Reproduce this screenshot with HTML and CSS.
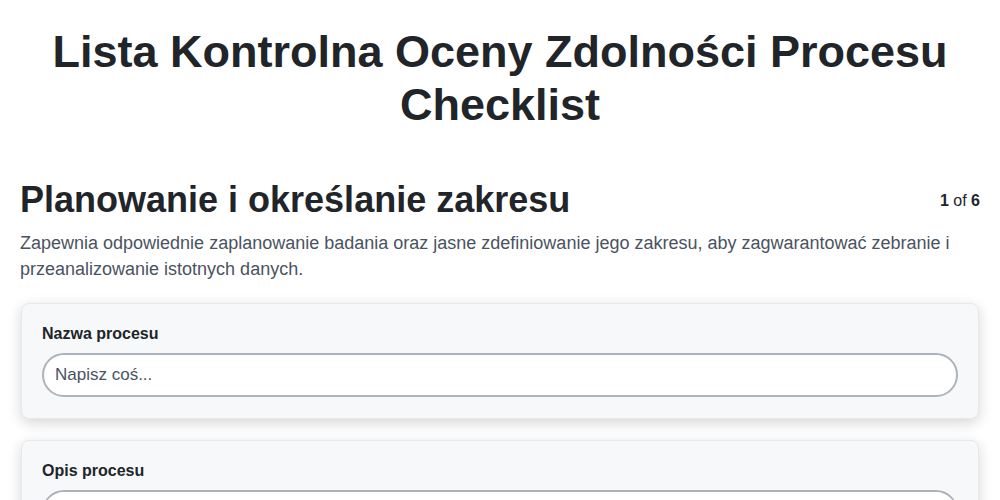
FILE: index.html
```html
<!DOCTYPE html>
<html lang="pl">
<head>
    <meta charset="UTF-8">
    <meta name="viewport" content="width=device-width, initial-scale=1.0">
    <title>Lista Kontrolna Oceny Zdolności Procesu Checklist</title>
    <link rel="stylesheet" href="styles.css">
</head>
<body>

    <div class="page">
        <h1 class="page-title">Lista Kontrolna Oceny Zdolności Procesu Checklist</h1>

        <div class="section-head">
            <h2 class="section-title">Planowanie i określanie zakresu</h2>
            <span class="step-count"><b>1</b> of <b>6</b></span>
        </div>
        <p class="section-desc">Zapewnia odpowiednie zaplanowanie badania oraz jasne zdefiniowanie jego zakresu, aby zagwarantować zebranie i przeanalizowanie istotnych danych.</p>

        <div class="field-card">
            <label class="field-label" for="name">Nazwa procesu</label>
            <input class="field-input" id="name" type="text" placeholder="Napisz coś...">
        </div>

        <div class="field-card">
            <label class="field-label" for="desc">Opis procesu</label>
            <input class="field-input" id="desc" type="text" placeholder="Napisz coś...">
        </div>
    </div>

</body>
</html>
```

FILE: styles.css
```css
* {
    margin: 0;
    padding: 0;
    box-sizing: border-box;
    font-family: 'Liberation Sans', Arial, sans-serif;
}

body {
    background: #ffffff;
    color: #212529;
}

.page {
    padding: 25px 20px 20px;
}

.page-title {
    font-size: 45px;
    line-height: 53px;
    font-weight: 700;
    text-align: center;
    color: #212529;
    margin-bottom: 47px;
}

.section-head {
    display: flex;
    justify-content: space-between;
    align-items: center;
}

.section-title {
    font-size: 36px;
    line-height: 43px;
    font-weight: 700;
    color: #212529;
}

.step-count {
    font-size: 16px;
    margin-top: 2px;
    color: #212529;
}

.section-desc {
    margin-top: 9px;
    font-size: 18px;
    line-height: 26px;
    color: #4a5361;
    margin-bottom: 21px;
}

.field-card {
    background: #f7f8fa;
    border: 1px solid #e6e8ec;
    border-radius: 8px;
    box-shadow: 0 4px 14px rgba(0, 0, 0, 0.16);
    padding: 21px 20px 21px;
    margin: 0 1px 21px;
}

.field-label {
    display: block;
    font-size: 16px;
    font-weight: 700;
    color: #212529;
    margin-bottom: 10px;
}

.field-input {
    display: block;
    width: 100%;
    height: 44px;
    padding: 0 11px;
    border: 2px solid #adb3bb;
    border-radius: 22px;
    background: #ffffff;
    font-size: 17px;
    color: #212529;
    outline: none;
}

.field-input::placeholder {
    color: #4a5361;
}
```
